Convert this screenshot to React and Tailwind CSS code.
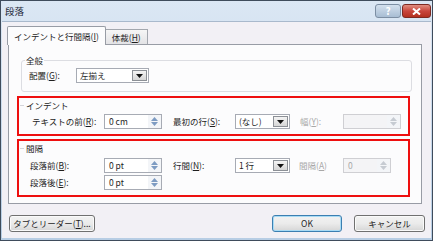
import React from "react";

const Key = ({ k }) => <span className="underline">{k}</span>;

const SpinBox = ({ value, w = "w-[58px]", disabled = false }) => (
    <div
        className={`${w} h-[15px] flex border ${
            disabled ? "border-[#cfcfd3] bg-[#f4f4f6] text-[#a8a8a8]" : "border-[#a7abb4] bg-white text-[#1e1e1e]"
        }`}
    >
        <div className="flex-1 pl-[4px] leading-[13px]">{value}</div>
        <div className="w-[13px] flex flex-col items-center justify-center gap-[1px] bg-[#f3f5f8]">
            <svg width="7" height="4" viewBox="0 0 7 4">
                <path d="M0 4 L3.5 0 L7 4 Z" fill={disabled ? "#c6cbd2" : "#7d9bc2"} />
            </svg>
            <svg width="7" height="4" viewBox="0 0 7 4">
                <path d="M0 0 L3.5 4 L7 0 Z" fill={disabled ? "#c6cbd2" : "#7d9bc2"} />
            </svg>
        </div>
    </div>
);

const Combo = ({ value, w = "w-[55px]" }) => (
    <div className={`${w} h-[15px] flex border border-[#a7abb4] bg-white`}>
        <div className="flex-1 pl-[3px] leading-[13px] text-[#1e1e1e]">{value}</div>
        <div className="w-[15px] m-[1px] flex items-center justify-center border border-[#8c9096] bg-gradient-to-b from-[#f4f4f4] to-[#d6d6d6]">
            <svg width="7" height="4" viewBox="0 0 7 4">
                <path d="M0 0 L3.5 4 L7 0 Z" fill="#111" />
            </svg>
        </div>
    </div>
);

const Button = ({ children, w, primary = false }) => (
    <div
        className={`${w} h-[17px] flex items-center justify-center whitespace-nowrap rounded-[3px] border ${
            primary ? "border-[#3c7fb1] shadow-[inset_0_0_0_1px_#a8dbf5]" : "border-[#707070] shadow-[inset_0_0_0_1px_#fafafa]"
        } bg-gradient-to-b from-[#f2f2f2] via-[#ebebeb] to-[#d6d6d6] text-[#1e1e1e]`}
    >
        {children}
    </div>
);

const Caption = ({ children }) => (
    <div className="flex items-center ml-[1px] mt-[2px] h-[10px] leading-[10px]">
        <div className="w-[4px] h-px bg-[#d4d5da] mr-[2px]" />
        {children}
    </div>
);

export default function App() {
    return (
        <div className="w-[433px] h-[241px] flex flex-col border border-[#3f4c5c] bg-gradient-to-b from-[#dbe7f4] to-[#b7cde4] font-['Noto_Sans_CJK_JP',sans-serif] text-[8.5px] text-[#1e1e1e] overflow-hidden whitespace-nowrap">
            {/* title bar */}
            <div className="h-[20px] flex items-center pl-[4px] pr-[1px]">
                <span className="text-[#1e2a3a] text-[9.5px]">段落</span>
                <div className="ml-auto flex gap-[1px] self-start mt-[3px]">
                    <div className="w-[26px] h-[14px] flex items-center justify-center rounded-[3px] border border-[#7c8ea3] bg-gradient-to-b from-[#d3e0ee] to-[#a8bdd3] text-white text-[10px] font-bold leading-none">
                        ?
                    </div>
                    <div className="w-[29px] h-[14px] flex items-center justify-center rounded-[3px] border border-[#7d2a22] bg-gradient-to-b from-[#e08d80] via-[#c9463d] to-[#b3301f]">
                        <svg width="9" height="7" viewBox="0 0 9 7">
                            <path d="M1 0.5 L8 6.5 M8 0.5 L1 6.5" stroke="#fff" strokeWidth="2" />
                        </svg>
                    </div>
                </div>
            </div>

            {/* body */}
            <div className="flex-1 mx-[1px] mb-[2px] bg-[#f2f0f5] border-t border-[#a9b9cc] flex flex-col">
                {/* tabs */}
                <div className="flex items-end ml-[5px] mt-[3px] h-[19px]">
                    <div className="h-[19px] px-[6px] flex items-center border border-b-0 border-[#989ca5] bg-[#fcfcfd] rounded-t-[2px] relative top-[1px]">
                        インデントと行間隔(<Key k="I" />)
                    </div>
                    <div className="h-[15px] px-[6px] flex items-center border border-l-0 border-b-0 border-[#a3a7ae] bg-gradient-to-b from-[#f6f6f6] to-[#e3e3e6]">
                        体裁(<Key k="H" />)
                    </div>
                </div>

                {/* panel */}
                <div className="ml-[6px] w-[414px] h-[160px] border border-[#989ca5] bg-[#fcfcfd] flex flex-col">
                    {/* general */}
                    <fieldset className="ml-[12px] mt-[10px] w-[391px] h-[37px] border border-[#dcdde2] rounded-[3px] px-0">
                        <legend className="ml-[3px] px-[1px] leading-[10px]">全般</legend>
                        <div className="flex items-center ml-[7px] mt-[3px]">
                            <span className="w-[47px]">
                                配置(<Key k="G" />):
                            </span>
                            <Combo value="左揃え" w="w-[73px]" />
                        </div>
                    </fieldset>

                    {/* indent */}
                    <div className="ml-[8px] mt-[4px] w-[393px] h-[40px] border-2 border-[#ee0f0f] flex flex-col">
                        <Caption>インデント</Caption>
                        <div className="flex items-center mt-[4px] ml-[13px]">
                            <span className="w-[72px]">
                                テキストの前(<Key k="R" />):
                            </span>
                            <SpinBox value="0 cm" />
                            <span className="w-[62px] ml-[11px]">
                                最初の行(<Key k="S" />):
                            </span>
                            <Combo value="(なし)" />
                            <span className="w-[43px] ml-[10px] text-[#a8a8a8]">
                                幅(<Key k="Y" />):
                            </span>
                            <SpinBox value="" disabled />
                        </div>
                    </div>

                    {/* spacing */}
                    <div className="ml-[8px] mt-[3px] w-[393px] h-[58px] border-2 border-[#ee0f0f] flex flex-col">
                        <Caption>間隔</Caption>
                        <div className="flex flex-col gap-[2px] mt-[5px] ml-[11px]">
                            <div className="flex items-center">
                                <span className="w-[74px]">
                                    段落前(<Key k="B" />):
                                </span>
                                <SpinBox value="0 pt" />
                                <span className="w-[62px] ml-[11px]">
                                    行間(<Key k="N" />):
                                </span>
                                <Combo value="1 行" />
                                <span className="w-[44px] ml-[9px] text-[#a8a8a8]">
                                    間隔(<Key k="A" />)
                                </span>
                                <SpinBox value="0" w="w-[48px]" disabled />
                            </div>
                            <div className="flex items-center">
                                <span className="w-[74px]">
                                    段落後(<Key k="E" />):
                                </span>
                                <SpinBox value="0 pt" />
                            </div>
                        </div>
                    </div>
                </div>

                {/* buttons */}
                <div className="flex items-center mt-[11px] ml-[7px] mr-[6px]">
                    <Button w="w-[86px]">
                        タブとリーダー(<Key k="T" />)...
                    </Button>
                    <div className="ml-auto flex gap-[12px]">
                        <Button w="w-[70px]" primary>
                            OK
                        </Button>
                        <Button w="w-[71px]">キャンセル</Button>
                    </div>
                </div>
            </div>
        </div>
    );
}
